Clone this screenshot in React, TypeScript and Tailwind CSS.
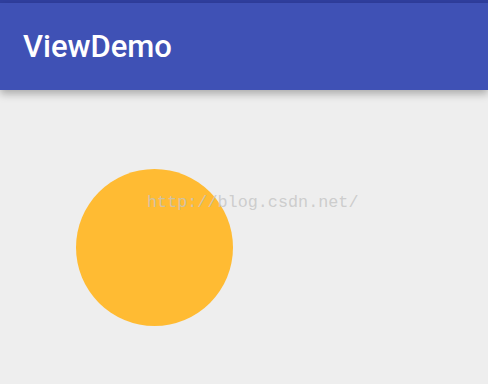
export default function App() {
  return (
    <div className="relative flex h-[384px] w-[488px] flex-col overflow-hidden bg-[#eeeeee]" style={{ fontFamily: "Roboto, 'Noto Sans', sans-serif" }}>
      {/* status bar strip */}
      <div className="h-[3px] bg-[#303f9f]" />
      {/* app bar */}
      <div className="relative z-10 flex h-[87px] items-center bg-[#3f51b5] pb-[1px] pl-[23px] shadow-[0_4px_8px_rgba(0,0,0,0.28)]">
        <span className="text-[31px] font-medium leading-none text-white">ViewDemo</span>
      </div>
      {/* canvas */}
      <div className="relative flex-1">
        <div className="ml-[76px] mt-[79px] h-[157px] w-[157px] rounded-full bg-[#ffbb33]" />
        <span
          className="absolute left-[147px] top-[105px] text-[16.8px] leading-none text-[#c4c4c4]/80"
          style={{ fontFamily: "'Liberation Mono', monospace" }}
        >
          http://blog.csdn.net/
        </span>
      </div>
    </div>
  );
}
